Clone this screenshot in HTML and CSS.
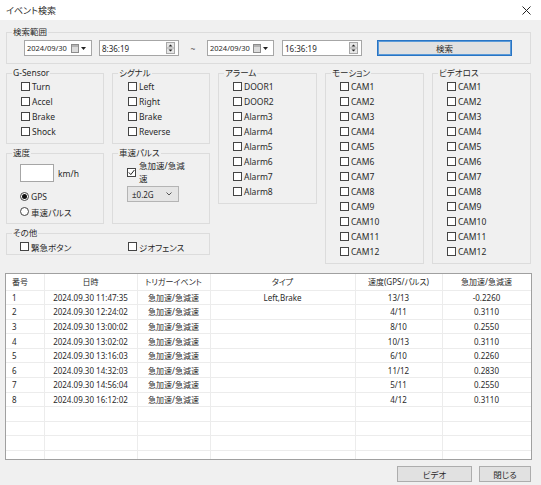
FILE: index.html
```html
<!DOCTYPE html>
<html>
<head>
<meta charset="utf-8">
	<title>イベント検索</title>
	<link rel="stylesheet" href="styles.css">
</head>
<body>
<div class="titlebar">
	<span class="title">イベント検索</span>
	<svg class="close" width="9" height="9" viewBox="0 0 9 9"><path d="M0.5 0.5L8.5 8.5M8.5 0.5L0.5 8.5" stroke="#222" stroke-width="1"/></svg>
</div>
<div class="content">
	<!-- 検索範囲 -->
	<fieldset class="group search">
		<legend>検索範囲</legend>
		<div class="search-row">
			<div class="field date">
				<span>2024/09/30</span>
				<span class="picker">
					<svg width="8" height="9" viewBox="0 0 8 9"><rect x="0.5" y="0.5" width="7" height="8" fill="#dcdcdc" stroke="#8c8c8c"/><rect x="1" y="1" width="6" height="2" fill="#b4b4b4"/></svg>
					<svg width="5" height="3" viewBox="0 0 5 3"><path d="M0 0H5L2.5 3Z" fill="#222"/></svg>
				</span>
			</div>
			<div class="field time">
				<span>8:36:19</span>
				<svg class="spin" width="9" height="12" viewBox="0 0 9 12"><rect x="0.5" y="0.5" width="8" height="11" fill="#e6e6e6" stroke="#a8a8a8"/><line x1="1" y1="6" x2="8" y2="6" stroke="#a8a8a8"/><path d="M2.5 4.5H6.5L4.5 2.5Z" fill="#222"/><path d="M2.5 7.5H6.5L4.5 9.5Z" fill="#222"/></svg>
			</div>
			<span class="tilde">~</span>
			<div class="field date date2">
				<span>2024/09/30</span>
				<span class="picker">
					<svg width="8" height="9" viewBox="0 0 8 9"><rect x="0.5" y="0.5" width="7" height="8" fill="#dcdcdc" stroke="#8c8c8c"/><rect x="1" y="1" width="6" height="2" fill="#b4b4b4"/></svg>
					<svg width="5" height="3" viewBox="0 0 5 3"><path d="M0 0H5L2.5 3Z" fill="#222"/></svg>
				</span>
			</div>
			<div class="field time time2">
				<span>16:36:19</span>
				<svg class="spin" width="9" height="12" viewBox="0 0 9 12"><rect x="0.5" y="0.5" width="8" height="11" fill="#e6e6e6" stroke="#a8a8a8"/><line x1="1" y1="6" x2="8" y2="6" stroke="#a8a8a8"/><path d="M2.5 4.5H6.5L4.5 2.5Z" fill="#222"/><path d="M2.5 7.5H6.5L4.5 9.5Z" fill="#222"/></svg>
			</div>
			<button class="btn btn-primary btn-search">検索</button>
		</div>
	</fieldset>

	<div class="filters">
		<div class="left-filters">
			<fieldset class="group">
				<legend>G-Sensor</legend>
				<div class="opts">
					<label class="opt"><span class="cb"></span>Turn</label>
					<label class="opt"><span class="cb"></span>Accel</label>
					<label class="opt"><span class="cb"></span>Brake</label>
					<label class="opt"><span class="cb"></span>Shock</label>
				</div>
			</fieldset>
			<fieldset class="group">
				<legend>シグナル</legend>
				<div class="opts opts-signal">
					<label class="opt"><span class="cb"></span>Left</label>
					<label class="opt"><span class="cb"></span>Right</label>
					<label class="opt"><span class="cb"></span>Brake</label>
					<label class="opt"><span class="cb"></span>Reverse</label>
				</div>
			</fieldset>
			<fieldset class="group speed">
				<legend>速度</legend>
				<div class="speed-row">
					<span class="speed-input"></span>
					<span>km/h</span>
				</div>
				<div class="opts radios">
					<label class="opt"><span class="rb on"></span>GPS</label>
					<label class="opt"><span class="rb"></span>車速パルス</label>
				</div>
			</fieldset>
			<fieldset class="group pulse">
				<legend>車速パルス</legend>
				<label class="pulse-opt">
					<span class="cb"><svg width="7" height="7" viewBox="0 0 7 7"><path d="M0.8 3.4L2.8 5.6L6.4 1" fill="none" stroke="#222" stroke-width="1"/></svg></span>
					<span class="pulse-text">急加速/急減速</span>
				</label>
				<div class="select">
					<span>±0.2G</span>
					<svg width="6" height="4" viewBox="0 0 6 4"><path d="M0.5 0.5L3 3L5.5 0.5" fill="none" stroke="#555" stroke-width="1"/></svg>
				</div>
			</fieldset>
			<fieldset class="group other">
				<legend>その他</legend>
				<div class="other-row">
					<label class="opt opt-wide"><span class="cb"></span>緊急ボタン</label>
					<label class="opt"><span class="cb"></span>ジオフェンス</label>
				</div>
			</fieldset>
		</div>

		<fieldset class="group tall">
			<legend>アラーム</legend>
			<div class="opts">
				<label class="opt"><span class="cb"></span>DOOR1</label>
				<label class="opt"><span class="cb"></span>DOOR2</label>
				<label class="opt"><span class="cb"></span>Alarm3</label>
				<label class="opt"><span class="cb"></span>Alarm4</label>
				<label class="opt"><span class="cb"></span>Alarm5</label>
				<label class="opt"><span class="cb"></span>Alarm6</label>
				<label class="opt"><span class="cb"></span>Alarm7</label>
				<label class="opt"><span class="cb"></span>Alarm8</label>
			</div>
		</fieldset>
		<fieldset class="group tall">
			<legend>モーション</legend>
			<div class="opts">
				<label class="opt"><span class="cb"></span>CAM1</label>
				<label class="opt"><span class="cb"></span>CAM2</label>
				<label class="opt"><span class="cb"></span>CAM3</label>
				<label class="opt"><span class="cb"></span>CAM4</label>
				<label class="opt"><span class="cb"></span>CAM5</label>
				<label class="opt"><span class="cb"></span>CAM6</label>
				<label class="opt"><span class="cb"></span>CAM7</label>
				<label class="opt"><span class="cb"></span>CAM8</label>
				<label class="opt"><span class="cb"></span>CAM9</label>
				<label class="opt"><span class="cb"></span>CAM10</label>
				<label class="opt"><span class="cb"></span>CAM11</label>
				<label class="opt"><span class="cb"></span>CAM12</label>
			</div>
		</fieldset>
		<fieldset class="group tall">
			<legend>ビデオロス</legend>
			<div class="opts">
				<label class="opt"><span class="cb"></span>CAM1</label>
				<label class="opt"><span class="cb"></span>CAM2</label>
				<label class="opt"><span class="cb"></span>CAM3</label>
				<label class="opt"><span class="cb"></span>CAM4</label>
				<label class="opt"><span class="cb"></span>CAM5</label>
				<label class="opt"><span class="cb"></span>CAM6</label>
				<label class="opt"><span class="cb"></span>CAM7</label>
				<label class="opt"><span class="cb"></span>CAM8</label>
				<label class="opt"><span class="cb"></span>CAM9</label>
				<label class="opt"><span class="cb"></span>CAM10</label>
				<label class="opt"><span class="cb"></span>CAM11</label>
				<label class="opt"><span class="cb"></span>CAM12</label>
			</div>
		</fieldset>
	</div>

	<!-- 検索結果 -->
	<div class="table-wrap">
		<table class="result">
			<colgroup>
				<col style="width:38px"><col style="width:93px"><col style="width:73px"><col style="width:145px"><col style="width:87px"><col style="width:89px">
			</colgroup>
			<thead>
				<tr><th class="num">番号</th><th>日時</th><th>トリガーイベント</th><th>タイプ</th><th>速度(GPS/パルス)</th><th>急加速/急減速</th></tr>
			</thead>
			<tbody>
				<tr><td class="num">1</td><td>2024.09.30 11:47:35</td><td>急加速/急減速</td><td>Left,Brake</td><td>13/13</td><td>-0.2260</td></tr>
				<tr><td class="num">2</td><td>2024.09.30 12:24:02</td><td>急加速/急減速</td><td></td><td>4/11</td><td>0.3110</td></tr>
				<tr><td class="num">3</td><td>2024.09.30 13:00:02</td><td>急加速/急減速</td><td></td><td>8/10</td><td>0.2550</td></tr>
				<tr><td class="num">4</td><td>2024.09.30 13:02:02</td><td>急加速/急減速</td><td></td><td>10/13</td><td>0.3110</td></tr>
				<tr><td class="num">5</td><td>2024.09.30 13:16:03</td><td>急加速/急減速</td><td></td><td>6/10</td><td>0.2260</td></tr>
				<tr><td class="num">6</td><td>2024.09.30 14:32:03</td><td>急加速/急減速</td><td></td><td>11/12</td><td>0.2830</td></tr>
				<tr><td class="num">7</td><td>2024.09.30 14:56:04</td><td>急加速/急減速</td><td></td><td>5/11</td><td>0.2550</td></tr>
				<tr><td class="num">8</td><td>2024.09.30 16:12:02</td><td>急加速/急減速</td><td></td><td>4/12</td><td>0.3110</td></tr>
				<tr><td></td><td></td><td></td><td></td><td></td><td></td></tr>
				<tr><td></td><td></td><td></td><td></td><td></td><td></td></tr>
				<tr><td></td><td></td><td></td><td></td><td></td><td></td></tr>
				<tr><td></td><td></td><td></td><td></td><td></td><td></td></tr>
			</tbody>
		</table>
	</div>

	<div class="footer">
		<button class="btn btn-video">ビデオ</button>
		<button class="btn btn-close">閉じる</button>
	</div>
</div>
</body>
</html>
```

FILE: styles.css
```css
*{
	margin: 0;
	padding: 0;
	box-sizing: border-box;
}
html,body{
	width: 541px;
	height: 485px;
	overflow: hidden;
}
body{
	background: #f0f0f0;
	font-family: "Noto Sans", "Noto Sans CJK JP", sans-serif;
	font-size: 8.5px;
	color: #2a2a2a;
	font-feature-settings: "palt";
}
.titlebar{
	height: 20px;
	background: #fff;
	display: flex;
	align-items: center;
	justify-content: space-between;
	padding: 0 10px 0 6px;
}
.title{
	font-size: 9px;
}
.content{
	padding: 6px 10px 0 6px;
}
/* group box */
.group{
	border: 1px solid #dcdcdc;
	padding: 0;
	min-width: 0;
}
.group legend{
	margin-left: 5px;
	padding: 0 1px;
	line-height: 12px;
	font-size: 8.5px;
}
.search-row{
	display: flex;
	align-items: center;
	height: 16px;
	margin: 2px 0 7px 17px;
}
.field{
	height: 16px;
	background: #fff;
	border: 1px solid #a6a6a6;
	display: flex;
	align-items: center;
	padding: 0 3px 0 2px;
	font-size: 8px;
}
.date{
	width: 68px;
	padding-right: 5px;
	font-size: 7.5px;
}
.date2{
	width: 67px;
}
.picker{
	margin-left: auto;
	display: flex;
	align-items: center;
	gap: 2px;
}
.time{
	width: 80px;
	margin-left: 7px;
	justify-content: space-between;
}
.time2{
	margin-left: 8px;
}
.tilde{
	width: 28px;
	text-align: center;
	color: #555;
}
.btn{
	height: 16px;
	border: 1px solid #adadad;
	background: #e1e1e1;
	font-family: inherit;
	font-size: 8.5px;
	color: inherit;
	font-feature-settings: "palt";
}
.btn-primary{
	border-color: #2874c4;
	box-shadow: inset 0 0 0 1px #5b9ad8;
}
.btn-search{
	width: 135px;
	margin-left: 15px;
}
/* filters */
.filters{
	display: flex;
	align-items: flex-start;
	gap: 8px;
	margin-top: 3px;
}
.left-filters{
	width: 204px;
	display: grid;
	grid-template-columns: 98px 98px;
	column-gap: 8px;
	row-gap: 3px;
}
.tall{
	width: 99px;
}
.opts{
	padding: 0 0 4px 14px;
}
.opts-signal{
	padding-left: 15px;
}
.opt{
	display: flex;
	align-items: center;
	gap: 2px;
	height: 15px;
	white-space: nowrap;
}
.cb{
	width: 9px;
	height: 9px;
	border: 1px solid #444;
	background: #fff;
	flex: none;
	display: flex;
	align-items: center;
	justify-content: center;
}
.rb{
	width: 9px;
	height: 9px;
	border: 1px solid #444;
	border-radius: 50%;
	background: #fff;
	flex: none;
	display: flex;
	align-items: center;
	justify-content: center;
}
.rb.on::after{
	content: "";
	width: 5px;
	height: 5px;
	border-radius: 50%;
	background: #111;
}
.speed-row{
	display: flex;
	align-items: center;
	gap: 4px;
	margin: 5px 0 0 13px;
}
.speed-input{
	width: 34px;
	height: 18px;
	background: #fff;
	border: 1px solid #a6a6a6;
}
.radios{
	margin-top: 7px;
	padding-left: 13px;
}
.pulse-opt{
	display: flex;
	align-items: center;
	gap: 3px;
	margin-left: 14px;
}
.pulse-text{
	width: 48px;
	line-height: 13px;
}
.select{
	width: 52px;
	height: 16px;
	margin: 1px 0 6px 14px;
	background: #e5e5e5;
	border: 1px solid #b4b4b4;
	display: flex;
	align-items: center;
	justify-content: space-between;
	padding: 0 6px 0 4px;
	font-size: 8px;
}
.other{
	grid-column: 1 / span 2;
}
.other-row{
	display: flex;
	padding-left: 13px;
}
.opt-wide{
	width: 108px;
}
/* result table */
.table-wrap{
	width: 527px;
	height: 187px;
	margin: 9px 0 0 -1px;
	border: 1px solid #a0a0a0;
	background: #fff;
	overflow: hidden;
}
.result{
	width: 525px;
	border-collapse: collapse;
	table-layout: fixed;
	font-size: 8px;
}
.result th,.result td{
	border-right: 1px solid #ececec;
	border-bottom: 1px solid #ececec;
	text-align: center;
	font-weight: normal;
	white-space: nowrap;
	overflow: hidden;
	padding: 0;
}
.result th{
	height: 16px;
}
.result td{
	height: 14.6px;
}
.result .num{
	text-align: left;
	padding-left: 6px;
}
.footer{
	display: flex;
	justify-content: flex-end;
	gap: 7px;
	margin-top: 6px;
}
.btn-video{
	width: 75px;
}
.btn-close{
	width: 52px;
}
```
